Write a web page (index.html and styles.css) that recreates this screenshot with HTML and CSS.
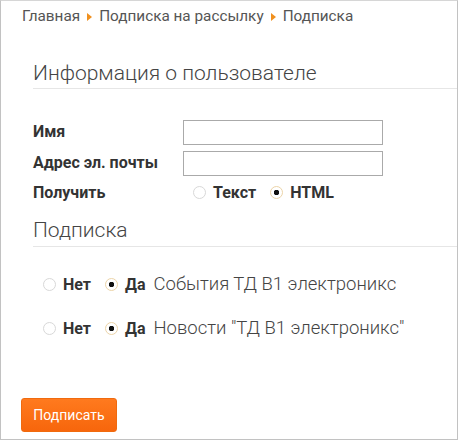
FILE: index.html
```html
<!DOCTYPE html>
<html lang="ru">
<head>
<meta charset="utf-8">
<link rel="stylesheet" href="styles.css">
</head>
<body>
<div class="page">
  <nav class="crumbs">
    <a class="crumb">Главная</a><span class="sep"></span><a class="crumb">Подписка на рассылку</a><span class="sep"></span><span class="crumb">Подписка</span>
  </nav>
  <form class="form">
    <h2 class="legend">Информация о пользователе</h2>
    <div class="fields">
      <label class="label label-input">Имя</label>
      <input class="text" type="text">
      <label class="label label-input">Адрес эл. почты</label>
      <input class="text" type="text">
      <label class="label">Получить</label>
      <div class="choices">
        <label class="opt"><input class="radio" type="radio" name="fmt">Текст</label>
        <label class="opt"><input class="radio" type="radio" name="fmt" checked>HTML</label>
      </div>
    </div>
    <h2 class="legend legend2">Подписка</h2>
    <div class="subs">
      <div class="sub">
        <label class="opt"><input class="radio" type="radio" name="s1">Нет</label>
        <label class="opt"><input class="radio" type="radio" name="s1" checked>Да</label>
        <span class="subname">События ТД В1 электроникс</span>
      </div>
      <div class="sub">
        <label class="opt"><input class="radio" type="radio" name="s2">Нет</label>
        <label class="opt"><input class="radio" type="radio" name="s2" checked>Да</label>
        <span class="subname">Новости "ТД В1 электроникс"</span>
      </div>
    </div>
    <button class="btn" type="button">Подписать</button>
  </form>
</div>
</body>
</html>
```
FILE: styles.css
```css
html, body {
  margin: 0;
  padding: 0;
  background: #fff;
}
body {
  font-family: Roboto, "Liberation Sans", sans-serif;
  color: #333;
}
.page {
  box-sizing: border-box;
  width: 458px;
  height: 440px;
  border: 1px solid #c2c2c2;
  border-top-color: #d6d6d6;
  padding: 5px 0 0 21px;
}
.crumbs {
  display: flex;
  align-items: center;
  height: 20px;
  font-size: 15.3px;
  color: #555;
}
.crumb {
  color: #555;
}
.sep {
  width: 0;
  height: 0;
  border-top: 4px solid transparent;
  border-bottom: 4px solid transparent;
  border-left: 5px solid #f0901e;
  margin: 1px 7px 0 7px;
}
.form {
  padding: 35px 0 0 11px;
}
.legend {
  margin: 0;
  font-weight: 300;
  font-size: 21px;
  line-height: 24px;
  color: #444;
  padding-bottom: 3px;
  border-bottom: 1px solid #e6e6e6;
}
.fields {
  display: grid;
  grid-template-columns: 150px 200px;
  grid-template-rows: 25px 25px 20px;
  row-gap: 6px;
  align-items: center;
  padding-top: 31px;
}
.label {
  font-weight: 700;
  font-size: 16px;
  color: #333;
}
.label-input {
  margin-top: -3px;
}
.text {
  box-sizing: border-box;
  width: 200px;
  height: 25px;
  border: 1px solid #aaa;
  margin: 0;
  padding: 0 4px;
}
.choices {
  display: flex;
  align-items: center;
  gap: 14px;
  padding-left: 10px;
  height: 20px;
}
.opt {
  display: flex;
  align-items: center;
  font-weight: 700;
  font-size: 16px;
  color: #333;
}
.radio {
  appearance: none;
  -webkit-appearance: none;
  box-sizing: border-box;
  width: 13px;
  height: 13px;
  margin: 0 7px 0 0;
  border-radius: 50%;
  border: 1px solid #d8d8d8;
  background: #fff;
}
.radio:checked {
  border-color: #ecd4a8;
  background: radial-gradient(circle, #111 0 2.5px, #fff 3px);
}
.legend2 {
  margin-top: 16px;
  padding-bottom: 4px;
}
.subs {
  display: flex;
  flex-direction: column;
  gap: 24px;
  padding: 27px 0 0 10px;
}
.sub {
  display: flex;
  align-items: center;
  height: 20px;
}
.sub .opt {
  margin-right: 14px;
}
.sub .opt:nth-child(2) {
  margin-right: 8px;
}
.subname {
  font-size: 18.5px;
  font-weight: 300;
  color: #444;
}
.btn {
  display: block;
  margin: 60px 0 0 -12px;
  width: 96px;
  height: 34px;
  border: 1px solid #f06a0e;
  border-radius: 3px;
  background: linear-gradient(#ff7a1e, #f7660c);
  color: #fff;
  font-family: Roboto, "Liberation Sans", sans-serif;
  font-size: 14px;
  padding: 0;
}
```
